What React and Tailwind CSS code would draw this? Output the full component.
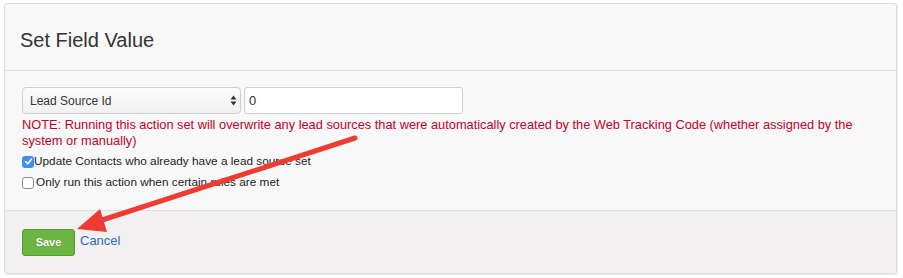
import React from "react";

function Check({ checked }) {
  return checked ? (
    <span className="flex h-[12px] w-[12px] shrink-0 items-center justify-center rounded-[3px] bg-[#3f8ef0]">
      <svg width="9" height="9" viewBox="0 0 10 10">
        <path d="M2 5.2 L4.2 7.6 L8.2 2.4" fill="none" stroke="white" strokeWidth="1.8" strokeLinecap="round" strokeLinejoin="round" />
      </svg>
    </span>
  ) : (
    <span className="h-[12px] w-[12px] shrink-0 rounded-[3px] border border-[#8e8e8e] bg-white" />
  );
}

export default function App() {
  return (
    <div className="relative h-[278px] w-[903px] bg-white pl-[4px] pt-[3px] font-['Liberation_Sans',Arial,sans-serif]">
      <div className="flex h-[271px] w-[893px] flex-col rounded-[3px] border border-[#dcdcdc] bg-[#f8f8f8] shadow-[1px_1px_1px_rgba(0,0,0,0.08)]">
        <div className="flex h-[67px] items-center border-b border-[#e2e2e2] pl-[15px] pt-[5px]">
          <h1 className="text-[20px] leading-none text-[#333]">Set Field Value</h1>
        </div>
        <div className="flex h-[139px] flex-col px-[17px] pt-[16px]">
          <div className="flex gap-[3px]">
            <div className="relative h-[27px] w-[219px]">
              <select
                defaultValue="lead"
                className="h-full w-full appearance-none rounded-[4px] border border-[#cfcfcf] bg-[linear-gradient(#fbfbfb,#f1f1f1)] pl-[7px] text-[12px] text-[#333] outline-none"
              >
                <option value="lead">Lead Source Id</option>
              </select>
              <svg className="pointer-events-none absolute right-[4px] top-[8px]" width="7" height="11" viewBox="0 0 7 11">
                <path d="M3.5 0.5 L6.5 4.5 L0.5 4.5 Z" fill="#333" />
                <path d="M3.5 10.5 L6.5 6.5 L0.5 6.5 Z" fill="#333" />
              </svg>
            </div>
            <input
              defaultValue="0"
              className="h-[27px] w-[219px] rounded-[3px] border border-[#cfcfcf] bg-white pl-[4px] text-[13px] text-[#333] outline-none"
            />
          </div>
          <p className="mt-[3px] text-[12.8px] leading-[16px] text-[#c4002c]">
            NOTE: Running this action set will overwrite any lead sources that were automatically created by the Web Tracking Code (whether assigned by the system or manually)
          </p>
          <label className="mt-[4px] flex h-[17px] items-center text-[11.8px] text-[#222]">
            <Check checked />
            <span>Update Contacts who already have a lead source set</span>
          </label>
          <label className="mt-[4px] flex h-[17px] items-center gap-[2px] text-[11.8px] text-[#222]">
            <Check checked={false} />
            <span>Only run this action when certain rules are met</span>
          </label>
        </div>
        <div className="flex flex-1 items-start gap-[5px] rounded-b-[3px] border-t border-[#dedede] bg-[#f2f0f1] pl-[17px] pt-[18px]">
          <button className="h-[27px] w-[53px] rounded-[3px] border border-[#55992f] bg-[#6bb544] text-[11px] font-bold text-white [text-shadow:0_0_1px_rgba(0,0,0,0.35)]">
            Save
          </button>
          <a className="pt-[4px] text-[13px] leading-[16px] text-[#2d6cb5]">Cancel</a>
        </div>
      </div>
      <svg className="pointer-events-none absolute left-0 top-0" width="903" height="278" viewBox="0 0 903 278">
        <line x1="355" y1="138" x2="96" y2="222" stroke="#ee3c34" strokeWidth="5" strokeLinecap="round" />
        <polygon points="77,229 100,209 107,232" fill="#ee3c34" />
      </svg>
    </div>
  );
}
